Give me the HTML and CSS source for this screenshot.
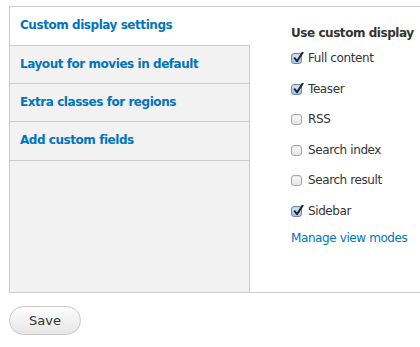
FILE: index.html
```html
<!DOCTYPE html>
<html>
<head>
<meta charset="utf-8">
<link rel="stylesheet" href="styles.css">
</head>
<body>
<div class="page">
  <div class="vtabs">
    <ul class="tab-list">
      <li class="tab active"><a href="#">Custom display settings</a></li>
      <li class="tab"><a href="#">Layout for movies in default</a></li>
      <li class="tab"><a href="#">Extra classes for regions</a></li>
      <li class="tab"><a href="#">Add custom fields</a></li>
    </ul>
    <div class="pane">
      <div class="title">Use custom display</div>
      <div class="item"><span class="cb checked"><svg viewBox="0 0 12 12" width="12" height="12"><path d="M2.6 6.2 L5 9.2 L10.6 0.6" fill="none" stroke="#1b2735" stroke-width="2" stroke-linecap="round" stroke-linejoin="round"/></svg></span><span class="label">Full content</span></div>
      <div class="item"><span class="cb checked"><svg viewBox="0 0 12 12" width="12" height="12"><path d="M2.6 6.2 L5 9.2 L10.6 0.6" fill="none" stroke="#1b2735" stroke-width="2" stroke-linecap="round" stroke-linejoin="round"/></svg></span><span class="label">Teaser</span></div>
      <div class="item"><span class="cb"></span><span class="label">RSS</span></div>
      <div class="item"><span class="cb"></span><span class="label">Search index</span></div>
      <div class="item"><span class="cb"></span><span class="label">Search result</span></div>
      <div class="item"><span class="cb checked"><svg viewBox="0 0 12 12" width="12" height="12"><path d="M2.6 6.2 L5 9.2 L10.6 0.6" fill="none" stroke="#1b2735" stroke-width="2" stroke-linecap="round" stroke-linejoin="round"/></svg></span><span class="label">Sidebar</span></div>
      <a class="manage" href="#">Manage view modes</a>
    </div>
  </div>
  <button class="save" type="button">Save</button>
</div>
</body>
</html>
```

FILE: styles.css
```css
html, body {
  margin: 0;
  padding: 0;
  overflow: hidden;
  background: #fff;
}
body {
  font-family: "DejaVu Sans", Verdana, sans-serif;
  font-size: 12px;
  color: #333;
}
.page {
  padding: 6px 0 0 9px;
}
.vtabs {
  display: flex;
  width: 700px;
  height: 287px;
  box-sizing: border-box;
  border: 1px solid #ccc;
}
.tab-list {
  list-style: none;
  margin: 0;
  padding: 0;
  width: 239px;
  flex: none;
  background: #f2f2f2;
  border-right: 1px solid #ccc;
}
.tab {
  height: 37px;
  border-bottom: 1px solid #ccc;
  display: flex;
  align-items: center;
  padding-left: 10px;
  padding-bottom: 2px;
  box-sizing: border-box;
  height: 38px;
}
.tab.active {
  height: 39px;
  background: #fff;
  margin-right: -1px;
}
.tab:last-child {
  height: 39px;
}
.tab a {
  color: #0074bd;
  text-decoration: none;
  font-weight: bold;
  letter-spacing: -0.45px;
  white-space: nowrap;
}
.pane {
  flex: 1;
  padding: 17px 0 0 41px;
  white-space: nowrap;
}
.title {
  font-weight: bold;
  letter-spacing: -0.45px;
  line-height: 18px;
  margin-bottom: 7px;
}
.item {
  display: flex;
  align-items: center;
  height: 18px;
  margin-bottom: 12.6px;
}
.cb {
  width: 9px;
  height: 9px;
  flex: none;
  border: 1px solid #a6a6a6;
  border-radius: 3px;
  background: linear-gradient(#fbfbfb, #e4e4e4);
  box-shadow: inset 0 1px 1px rgba(0,0,0,0.08);
  position: relative;
  margin-right: 6px;
  margin-top: 1px;
}
.cb.checked {
  border-color: #6f87a6;
  background: linear-gradient(#dbe7f6, #a9c3e6);
}
.cb svg {
  position: absolute;
  left: 0;
  top: -2px;
}
.label {
  letter-spacing: -0.4px;
  line-height: 18px;
}
.manage {
  display: block;
  margin-top: -4px;
  line-height: 18px;
  color: #0074bd;
  text-decoration: none;
  letter-spacing: -0.4px;
}
.save {
  display: block;
  margin-top: 13px;
  height: 29px;
  width: 72px;
  padding: 0;
  font-family: "DejaVu Sans", Verdana, sans-serif;
  font-size: 13px;
  color: #333;
  border: 1px solid #c8c8c8;
  border-radius: 15px;
  background: linear-gradient(#fdfdfd, #e6e6e6);
}
```
